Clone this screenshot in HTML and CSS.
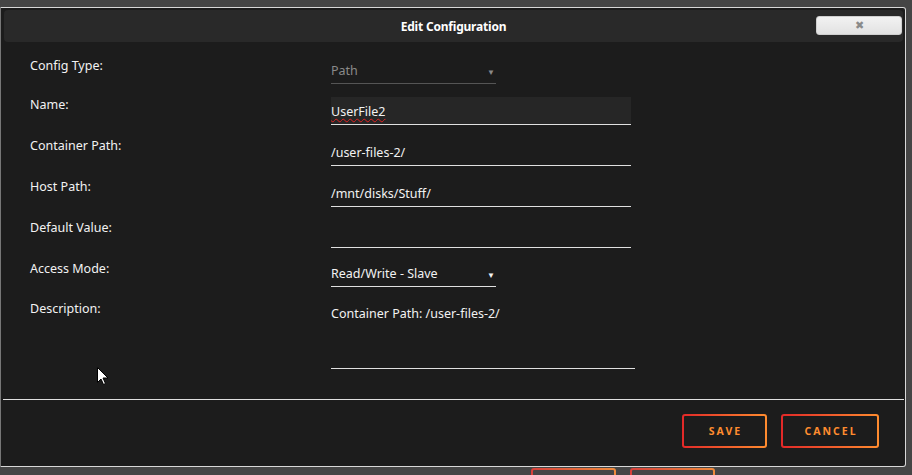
FILE: index.html
```html
<!DOCTYPE html>
<html lang="en">
<head>
  <meta charset="UTF-8" />
  <title>Edit Configuration</title>
  <link rel="stylesheet" href="styles.css">
</head>
<body>
  <div class="dialog">
    <div class="titlebar">
      <span class="title">Edit Configuration</span>
      <button class="close-btn">&#x2716;</button>
    </div>

    <div class="form">
      <div class="row">
        <label>Config Type:</label>
        <div class="select disabled"><span>Path</span><span class="caret">&#9660;</span></div>
      </div>
      <div class="row">
        <label>Name:</label>
        <div class="input filled"><span class="spell">UserFile2</span></div>
      </div>
      <div class="row">
        <label>Container Path:</label>
        <div class="input">/user-files-2/</div>
      </div>
      <div class="row">
        <label>Host Path:</label>
        <div class="input">/mnt/disks/Stuff/</div>
      </div>
      <div class="row">
        <label>Default Value:</label>
        <div class="input"></div>
      </div>
      <div class="row">
        <label>Access Mode:</label>
        <div class="select"><span>Read/Write - Slave</span><span class="caret">&#9660;</span></div>
      </div>
      <div class="row row-desc">
        <label>Description:</label>
        <div class="textarea">Container Path: /user-files-2/</div>
      </div>
    </div>

    <div class="footer">
      <button class="btn">SAVE</button>
      <button class="btn btn-wide">CANCEL</button>
    </div>
  </div>

  <div class="under">
    <span class="ghost-btn"></span>
    <span class="ghost-btn"></span>
  </div>

  <svg class="cursor" width="12" height="19" viewBox="0 0 12 19">
    <path d="M0.5 0.5 L0.5 15.5 L4 12 L6.5 17.5 L8.5 16.5 L6 11 L11 11 Z" fill="#fff" stroke="#000" stroke-width="1"/>
  </svg>
</body>
</html>
```

FILE: styles.css
```css
html, body {
  margin: 0;
  padding: 0;
  height: 100%;
  background: #454545;
  font-family: 'Noto Sans', 'Open Sans', sans-serif;
  color: #f2f2f2;
  overflow: hidden;
}

body {
  padding-top: 7px;
  position: relative;
}

.dialog {
  width: 904px;
  height: 458px;
  background: #1c1c1c;
  border: 1px solid #d8d8d8;
  border-left-color: #777;
  border-radius: 0 3px 3px 0;
  display: flex;
  flex-direction: column;
}

.titlebar {
  margin: 2px 2px 0 3px;
  height: 32px;
  background: #292929;
  border-radius: 4px;
  display: flex;
  align-items: center;
  justify-content: center;
  position: relative;
}

.title {
  font-size: 12px;
  font-weight: bold;
  color: #fff;
  letter-spacing: -0.2px;
}

.close-btn {
  position: absolute;
  right: 1px;
  top: 6px;
  width: 86px;
  height: 19px;
  border: 1px solid #cfcfcf;
  border-radius: 3px;
  background: linear-gradient(to bottom, #f2f2f2, #e2e2e2);
  color: #8a8a8a;
  font-size: 11px;
  line-height: 15px;
  padding: 0;
}

.form {
  padding: 16px 0 0 29px;
  display: flex;
  flex-direction: column;
  gap: 13px;
  flex: 1;
}

.row {
  display: flex;
  align-items: flex-start;
}

.row-desc {
  margin-top: 1px;
}

.row label {
  width: 301px;
  font-size: 12.5px;
  line-height: 15px;
}

.input, .select, .textarea {
  box-sizing: border-box;
  font-size: 12.5px;
  line-height: 15px;
  color: #f2f2f2;
  border-bottom: 1px solid #e0e0e0;
}

.input {
  width: 300px;
  height: 28px;
  padding-top: 7px;
}

.input.filled {
  background: #262626;
}

.spell {
  text-decoration: underline wavy #e02020;
  text-decoration-thickness: 1px;
  text-underline-offset: 2px;
}

.select {
  width: 165px;
  height: 26px;
  padding-top: 5px;
  display: flex;
  justify-content: space-between;
}

.select.disabled {
  color: #8a8a8a;
  border-bottom-color: #555;
}

.caret {
  font-size: 8px;
  padding-top: 1px;
  margin-right: 1px;
}

.textarea {
  width: 304px;
  height: 68px;
  padding-top: 5px;
}

.footer {
  border-top: 1px solid #e0e0e0;
  margin: 0 1px 0 2px;
  height: 67px;
  display: flex;
  justify-content: flex-end;
  align-items: flex-start;
  gap: 14px;
  padding: 14px 25px 0 0;
  box-sizing: border-box;
}

.btn {
  height: 34px;
  width: 85px;
  padding: 0;
  border: 2px solid transparent;
  border-radius: 3px;
  background:
    linear-gradient(#1c1c1c, #1c1c1c) padding-box,
    linear-gradient(to right, #e22828, #ff8c2f) border-box;
  color: #ff8c2f;
  font-family: 'Noto Sans', sans-serif;
  font-size: 10.5px;
  font-weight: bold;
  letter-spacing: 2px;
  text-indent: 2px;
}

.btn-wide {
  width: 98px;
}

.under {
  display: flex;
  gap: 14px;
  padding-left: 531px;
  margin-top: 1px;
}

.ghost-btn {
  width: 85px;
  height: 20px;
  border: 2px solid transparent;
  border-radius: 3px;
  background:
    linear-gradient(#454545, #454545) padding-box,
    linear-gradient(to right, #d8403a, #f08a3a) border-box;
  box-sizing: border-box;
}

.cursor {
  position: absolute;
  left: 97px;
  top: 367px;
}
```
